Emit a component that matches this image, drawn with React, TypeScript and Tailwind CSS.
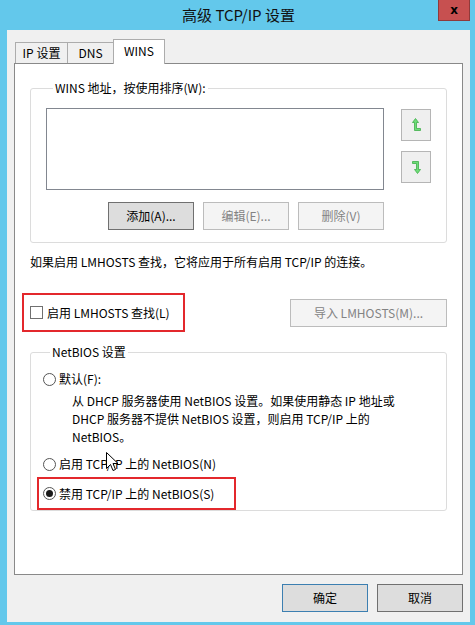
import React from "react";

const font = { fontFamily: '"Noto Sans CJK SC", "Noto Sans", sans-serif' };

function Btn({ children, disabled, def, className = "" }: { children: React.ReactNode; disabled?: boolean; def?: boolean; className?: string }) {
  const cls = disabled
    ? "bg-[#f4f4f4] border-[#bcbcbc] text-[#838383]"
    : def
    ? "bg-[#dddddd] border-[#3c7fb1] text-black"
    : "bg-[#dddddd] border-[#707070] text-black";
  return (
    <div className={`h-[28px] w-[86px] border flex items-center justify-center text-[12px] leading-[16px] ${cls} ${className}`}>
      {children}
    </div>
  );
}

function Radio({ checked }: { checked?: boolean }) {
  return (
    <div className="w-[13px] h-[13px] rounded-full border border-[#555] bg-white flex items-center justify-center shrink-0">
      {checked && <div className="w-[7px] h-[7px] rounded-full bg-[#1a1a1a]" />}
    </div>
  );
}

function ArrowUp() {
  return (
    <svg width="9" height="14" viewBox="0 0 9 14">
      <path d="M3.5 0.5 L0.5 4.5 L2.5 4.5 L2.5 12.5 L8.5 12.5 L8.5 10.5 L4.5 10.5 L4.5 4.5 L6.5 4.5 Z" fill="#6fdc78" stroke="#3fae4a" strokeWidth="0.8" strokeLinejoin="round" />
    </svg>
  );
}

function ArrowDown() {
  return (
    <svg width="9" height="14" viewBox="0 0 9 14">
      <path d="M0.5 1.5 L6.5 1.5 L6.5 9.5 L8.5 9.5 L5.5 13.5 L2.5 9.5 L4.5 9.5 L4.5 3.5 L0.5 3.5 Z" fill="#6fdc78" stroke="#3fae4a" strokeWidth="0.8" strokeLinejoin="round" />
    </svg>
  );
}

export default function App() {
  return (
    <div className="w-[475px] h-[625px] bg-[#63c8eb] flex flex-col relative overflow-hidden text-black" style={font}>
      {/* title bar */}
      <div className="h-[30px] shrink-0 relative flex items-center justify-center">
        <span className="text-[15px] leading-[20px] text-[#111] ml-[2px]">高级 TCP/IP 设置</span>
        <div className="absolute right-[5px] top-0 w-[32px] h-[21px] bg-[#c75050] border border-t-0 border-[#8f3a3a] flex items-center justify-center">
          <span className="text-[12px] font-bold leading-none text-black" style={{ fontFamily: '"DejaVu Sans", sans-serif' }}>x</span>
        </div>
      </div>

      {/* body */}
      <div className="ml-[7px] mr-[5px] mb-[3px] flex-1 bg-[#f0f0f0] flex flex-col px-[7px]">
        {/* tabs */}
        <div className="mt-[9px] h-[24px] flex items-end pl-[1px]">
          <div className="h-[21px] w-[53px] border border-b-0 border-[#acacac] bg-[#f0f0f0] flex items-center justify-center text-[12px] leading-[16px]">IP 设置</div>
          <div className="h-[21px] w-[47px] -ml-[1px] border border-b-0 border-[#acacac] bg-[#f0f0f0] flex items-center justify-center text-[12px] leading-[16px]">DNS</div>
          <div className="h-[25px] w-[52px] -ml-[1px] -mb-[1px] relative z-10 border border-b-0 border-[#acacac] bg-white flex items-start justify-center pt-[3px] text-[12px] leading-[16px]">WINS</div>
        </div>

        {/* panel */}
        <div className="h-[512px] border border-[#898989] bg-white px-[15px] pt-[16px] flex flex-col">
          <fieldset className="border border-[#dcdcdc] rounded-[3px] px-[15px] pb-[12px] m-0">
            <legend className="ml-[7px] px-[2px] text-[12px] leading-[16px]">WINS 地址，按使用排序(W):</legend>
            <div className="mt-[12px] flex gap-[17px]">
              <div className="w-[338px] flex flex-col">
                <div className="h-[82px] border border-[#828790] bg-white" />
                <div className="mt-[12px] flex justify-end gap-[9px]">
                  <Btn>添加(A)...</Btn>
                  <Btn disabled>编辑(E)...</Btn>
                  <Btn disabled>删除(V)</Btn>
                </div>
              </div>
              <div className="flex flex-col gap-[10px] pt-[1px]">
                <div className="w-[30px] h-[32px] border border-[#b5b5b5] bg-[#efefef] flex items-center justify-center"><ArrowUp /></div>
                <div className="w-[30px] h-[32px] border border-[#b5b5b5] bg-[#efefef] flex items-center justify-center"><ArrowDown /></div>
              </div>
            </div>
          </fieldset>

          <div className="mt-[11px] text-[12px] leading-[16px]">如果启用 LMHOSTS 查找，它将应用于所有启用 TCP/IP 的连接。</div>

          <div className="mt-[23px] flex items-center justify-between">
            <div className="-ml-[8px] w-[163px] h-[39px] border-2 border-[#e3282c] flex items-center pl-[6px] gap-[4px]">
              <div className="w-[13px] h-[13px] border border-[#707070] bg-white shrink-0" />
              <span className="text-[12px] leading-[16px] whitespace-nowrap">启用 LMHOSTS 查找(L)</span>
            </div>
            <Btn disabled className="w-[157px]">导入 LMHOSTS(M)...</Btn>
          </div>

          <fieldset className="mt-[12px] border border-[#dcdcdc] rounded-[3px] pl-[12px] pr-[12px] pb-0 m-0">
            <legend className="ml-[7px] px-[2px] text-[12px] leading-[16px]">NetBIOS 设置</legend>
            <div className="mt-[11px] flex items-center gap-[3px] h-[16px]">
              <Radio />
              <span className="text-[12px] leading-[16px]">默认(F):</span>
            </div>
            <div className="mt-[5px] ml-[29px] text-[12px] leading-[18px] whitespace-nowrap">
              从 DHCP 服务器使用 NetBIOS 设置。如果使用静态 IP 地址或<br />
              DHCP 服务器不提供 NetBIOS 设置，则启用 TCP/IP 上的<br />
              NetBIOS。
            </div>
            <div className="mt-[10px] flex items-center gap-[3px] h-[16px]">
              <Radio />
              <span className="text-[12px] leading-[16px]">启用 TCP/IP 上的 NetBIOS(N)</span>
            </div>
            <div className="mt-[5px] -ml-[6px] w-[199px] h-[33px] border-2 border-[#e3282c] flex items-center pl-[4px] gap-[3px]">
              <Radio checked />
              <span className="text-[12px] leading-[16px] whitespace-nowrap">禁用 TCP/IP 上的 NetBIOS(S)</span>
            </div>
          </fieldset>
        </div>

        {/* bottom buttons */}
        <div className="mt-[9px] flex justify-end gap-[9px]">
          <Btn def>确定</Btn>
          <Btn>取消</Btn>
        </div>
      </div>

      {/* mouse cursor */}
      <svg className="absolute left-[106px] top-[452px]" width="13" height="21" viewBox="0 0 13 21">
        <path d="M0.5 0.5 L0.5 16.5 L4.5 12.5 L7 18.5 L9.5 17.5 L7 11.5 L12 11.5 Z" fill="white" stroke="black" strokeWidth="1" strokeLinejoin="miter" />
      </svg>
    </div>
  );
}
